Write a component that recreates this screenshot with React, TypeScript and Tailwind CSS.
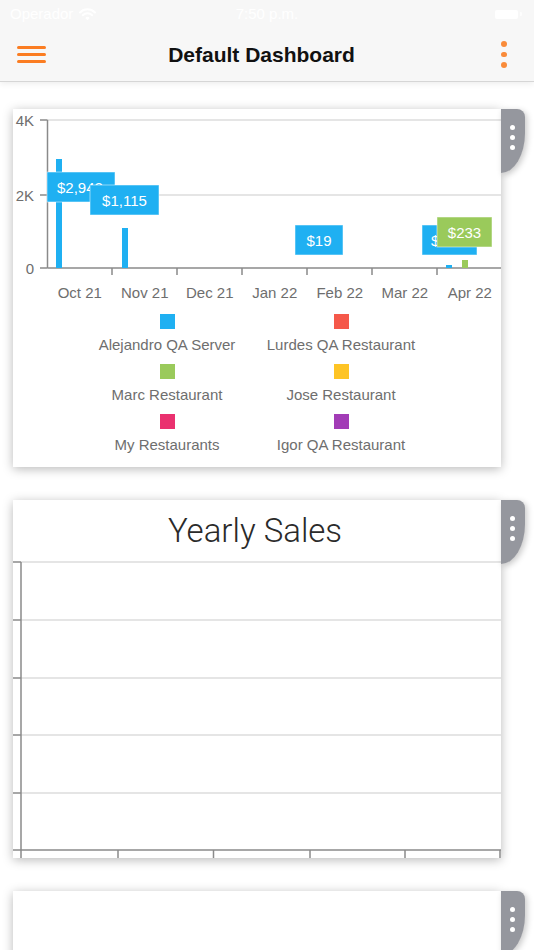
import React from "react";

const BLUE = "#1fb0f2";
const GREEN = "#9aca5b";

const legend = [
    { name: "Alejandro QA Server", color: "#1fb0f2" },
    { name: "Lurdes QA Restaurant", color: "#f5584a" },
    { name: "Marc Restaurant", color: "#9aca5b" },
    { name: "Jose Restaurant", color: "#fec425" },
    { name: "My Restaurants", color: "#ea316f" },
    { name: "Igor QA Restaurant", color: "#a23cb6" },
];

const months = ["Oct 21", "Nov 21", "Dec 21", "Jan 22", "Feb 22", "Mar 22", "Apr 22"];

const Tab = () => (
    <div className="w-[24px] h-[64px] shrink-0 bg-[#95979e] rounded-tr-[8px] rounded-br-[24px_40px] shadow-[2px_2px_6px_rgba(0,0,0,0.22)] flex flex-col items-center gap-[5px] pt-[16px] pr-[2px]">
        <span className="w-[5px] h-[5px] rounded-full bg-white" />
        <span className="w-[5px] h-[5px] rounded-full bg-white" />
        <span className="w-[5px] h-[5px] rounded-full bg-white" />
    </div>
);

const Card = ({ children, className }: { children?: React.ReactNode; className?: string }) => (
    <div className="flex items-start pl-[13px]">
        <div className={"w-[488px] shrink-0 bg-white shadow-[0_2px_10px_rgba(0,0,0,0.28)] " + (className ?? "")}>{children}</div>
        <Tab />
    </div>
);

const ValueLabel = ({ x, y, w, fill, text, tx, anchor = "middle" }: { x: number; y: number; w: number; fill: string; text: string; tx: number; anchor?: "middle" | "start" }) => (
    <g>
        <rect x={x} y={y} width={w} height={30} fill={fill} stroke="rgba(255,255,255,0.5)" strokeWidth={1} />
        <text x={tx} y={y + 15} fill="#fff" fontSize={15} textAnchor={anchor} dominantBaseline="central">{text}</text>
    </g>
);

const MonthlyChart = () => (
    <svg width={488} height={200} className="block overflow-visible">
        {/* grid */}
        <line x1={34.5} y1={11} x2={488} y2={11} stroke="#dcdcdc" strokeWidth={1.5} />
        <line x1={34.5} y1={86} x2={488} y2={86} stroke="#dcdcdc" strokeWidth={1.5} />
        {/* axes */}
        <line x1={34.5} y1={11} x2={34.5} y2={159} stroke="#8a8a8a" strokeWidth={1.5} />
        <line x1={34.5} y1={159} x2={488} y2={159} stroke="#8a8a8a" strokeWidth={1.5} />
        {[11, 86, 159].map((y) => <line key={y} x1={27} y1={y} x2={34.5} y2={y} stroke="#8a8a8a" strokeWidth={1.5} />)}
        {[99, 164, 229, 294, 359, 424].map((x) => <line key={x} x1={x} y1={159} x2={x} y2={166} stroke="#8a8a8a" strokeWidth={1.5} />)}
        <text x={21} y={11} fontSize={15} fill="#6e6e6e" textAnchor="end" dominantBaseline="central">4K</text>
        <text x={21} y={86} fontSize={15} fill="#6e6e6e" textAnchor="end" dominantBaseline="central">2K</text>
        <text x={21} y={159} fontSize={15} fill="#6e6e6e" textAnchor="end" dominantBaseline="central">0</text>
        {months.map((m, i) => (
            <text key={m} x={66.75 + 65 * i} y={183} fontSize={15} fill="#6e6e6e" textAnchor="middle" dominantBaseline="central">{m}</text>
        ))}
        {/* bars */}
        <rect x={43} y={50} width={6} height={109} fill={BLUE} />
        <rect x={109} y={119} width={6} height={40} fill={BLUE} />
        <rect x={433} y={156} width={6} height={3} fill={BLUE} />
        <rect x={449} y={151} width={6} height={8} fill={GREEN} />
        {/* value labels */}
        <ValueLabel x={34} y={63} w={68} fill={BLUE} text="$2,942" tx={44} anchor="start" />
        <ValueLabel x={77} y={76} w={69} fill={BLUE} text="$1,115" tx={111.5} />
        <ValueLabel x={282} y={116} w={48} fill={BLUE} text="$19" tx={306} />
        <ValueLabel x={409} y={116} w={55} fill={BLUE} text="$37" tx={418} anchor="start" />
        <ValueLabel x={424} y={108} w={55} fill={GREEN} text="$233" tx={451.5} />
    </svg>
);

const YearlyChart = () => (
    <svg width={488} height={296} className="block overflow-visible">
        {[0, 58, 116, 173, 231].map((y) => (
            <g key={y}>
                <line x1={8} y1={y} x2={488} y2={y} stroke="#dcdcdc" strokeWidth={1.5} />
                <line x1={0} y1={y} x2={8} y2={y} stroke="#8a8a8a" strokeWidth={1.5} />
            </g>
        ))}
        <line x1={8} y1={0} x2={8} y2={296} stroke="#8a8a8a" strokeWidth={1.5} />
        <line x1={0} y1={288} x2={488} y2={288} stroke="#8a8a8a" strokeWidth={1.5} />
        {[105, 200.5, 297, 392, 487].map((x) => <line key={x} x1={x} y1={288} x2={x} y2={296} stroke="#8a8a8a" strokeWidth={1.5} />)}
    </svg>
);

export default function App() {
    return (
        <div className="w-[534px] h-[950px] overflow-hidden bg-white font-['Liberation_Sans',Arial,sans-serif]">
            <div className="relative z-10 bg-[#f7f7f7] border-b border-[#d6d6d6] shadow-[0_2px_6px_rgba(0,0,0,0.07)]">
                {/* status bar */}
                <div className="h-[28px] flex items-center justify-between px-[10px] text-white text-[15px]">
                    <div className="flex items-center gap-[6px] w-[120px]">
                        <span>Operador</span>
                        <svg width={17} height={13} viewBox="0 0 17 13" fill="none">
                            <path d="M1 4.5 A10.5 10.5 0 0 1 16 4.5" stroke="#fff" strokeWidth={2} strokeLinecap="round" />
                            <path d="M3.8 7.3 A6.5 6.5 0 0 1 13.2 7.3" stroke="#fff" strokeWidth={2} strokeLinecap="round" />
                            <path d="M6.3 9.9 L8.5 12.3 L10.7 9.9 A3 3 0 0 0 6.3 9.9 Z" fill="#fff" />
                        </svg>
                    </div>
                    <span>7:50 p.m.</span>
                    <div className="w-[120px] flex items-center justify-end gap-[2px] pr-[2px]">
                        <div className="w-[23px] h-[9px] rounded-[2px] bg-white" />
                        <div className="w-[2px] h-[4px] rounded-r-[1px] bg-white/70" />
                    </div>
                </div>
                {/* nav bar */}
                <div className="h-[53px] flex items-center justify-between pl-[17px] pr-[27px]">
                    <div className="flex flex-col gap-[4.5px] w-[29px]">
                        <span className="h-[2.5px] rounded-full bg-[#fb7d22]" />
                        <span className="h-[2.5px] rounded-full bg-[#fb7d22]" />
                        <span className="h-[2.5px] rounded-full bg-[#fb7d22]" />
                    </div>
                    <span className="text-[21px] font-bold text-[#111] mr-[24px]">Default Dashboard</span>
                    <div className="flex flex-col gap-[5px] w-[6px] items-center">
                        <span className="w-[5.5px] h-[5.5px] rounded-full bg-[#f98b3a]" />
                        <span className="w-[5.5px] h-[5.5px] rounded-full bg-[#f98b3a]" />
                        <span className="w-[5.5px] h-[5.5px] rounded-full bg-[#f98b3a]" />
                    </div>
                </div>
            </div>

            <div className="pt-[27px] flex flex-col gap-[33px]">
                <Card>
                    <MonthlyChart />
                    <div className="pt-[5px] pb-[12px] pl-[67px] grid grid-cols-[174px_174px] gap-y-[9px]">
                        {legend.map((l) => (
                            <div key={l.name} className="flex flex-col items-center gap-[6px]">
                                <span className="w-[15px] h-[15px]" style={{ backgroundColor: l.color }} />
                                <span className="text-[15px] leading-[20px] text-[#6e6e6e] whitespace-nowrap">{l.name}</span>
                            </div>
                        ))}
                    </div>
                </Card>

                <Card>
                    <div className="h-[62px] flex items-center justify-center pr-[4px]">
                        <span className="font-['Roboto',sans-serif] font-light text-[33px] text-[#2a2a2a]">Yearly Sales</span>
                    </div>
                    <YearlyChart />
                </Card>

                <Card className="h-[120px]" />
            </div>
        </div>
    );
}
